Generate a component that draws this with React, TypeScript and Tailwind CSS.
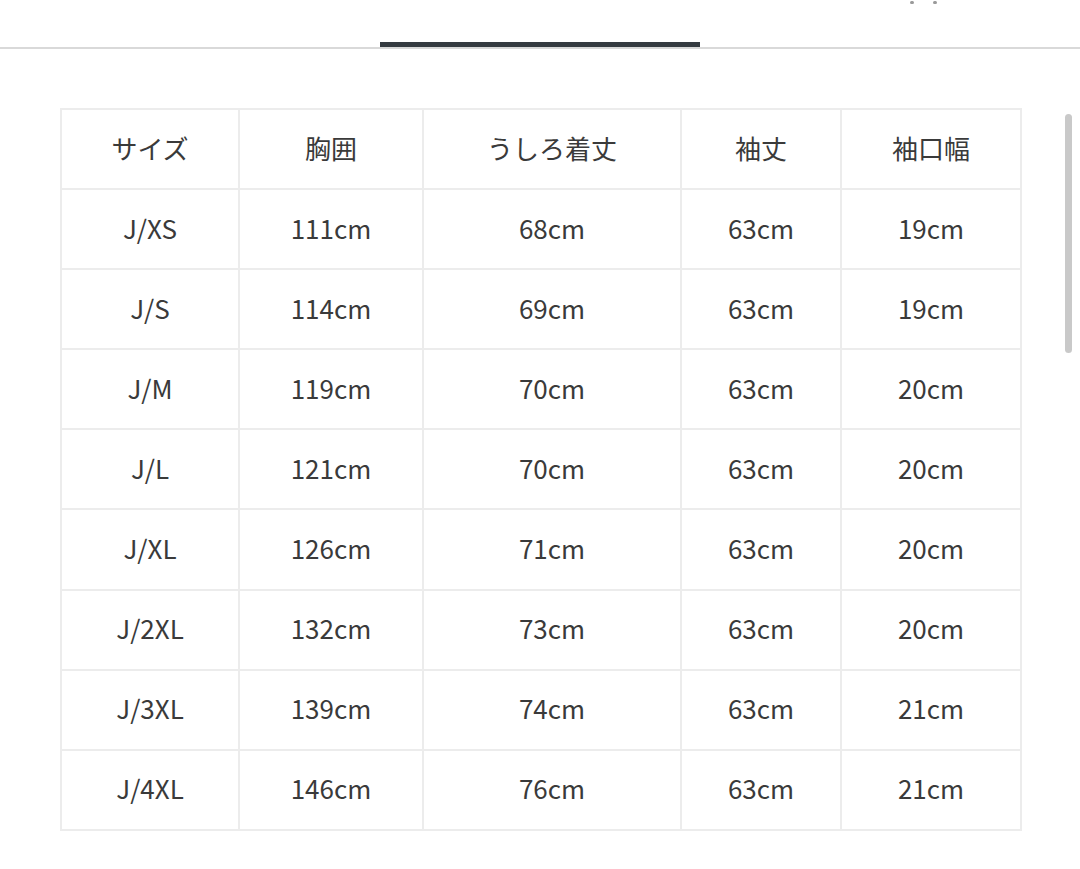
import React from 'react'

const headers = ['サイズ', '胸囲', 'うしろ着丈', '袖丈', '袖口幅']

const rows: string[][] = [
  ['J/XS', '111cm', '68cm', '63cm', '19cm'],
  ['J/S', '114cm', '69cm', '63cm', '19cm'],
  ['J/M', '119cm', '70cm', '63cm', '20cm'],
  ['J/L', '121cm', '70cm', '63cm', '20cm'],
  ['J/XL', '126cm', '71cm', '63cm', '20cm'],
  ['J/2XL', '132cm', '73cm', '63cm', '20cm'],
  ['J/3XL', '139cm', '74cm', '63cm', '21cm'],
  ['J/4XL', '146cm', '76cm', '63cm', '21cm']
]

const colWidths = ['w-[178px]', 'w-[184px]', 'w-[258px]', 'w-[160px]', 'w-[180px]']

export default function App() {
  return (
    <div
      className="relative h-[869px] w-[1080px] overflow-hidden bg-white text-[#3a3a3a]"
      style={{ fontFamily: '"Noto Sans CJK JP", "Noto Sans", sans-serif' }}
    >
      {/* tab bar */}
      <div className="flex h-[49px] flex-col border-b-2 border-[#d9d9d9]">
        <div className="flex h-[42px] justify-end gap-[19px] pr-[143px]">
          <span className="mt-[1px] h-[3px] w-[4px] rounded-full bg-[#9a9a9a]" />
          <span className="mt-[1px] h-[3px] w-[4px] rounded-full bg-[#9a9a9a]" />
        </div>
        <div className="ml-[380px] h-[5px] w-[320px] bg-[#343a40]" />
      </div>

      <div className="pl-[60px] pt-[59px]">
        <table className="table-fixed border-collapse text-center text-[26px] font-normal">
          <colgroup>
            {colWidths.map((w, i) => (
              <col key={i} className={w} />
            ))}
          </colgroup>
          <thead>
            <tr className="h-[80.1px]">
              {headers.map((h) => (
                <th key={h} className="border-2 border-[#ececec] pb-[4px] font-normal">
                  {h}
                </th>
              ))}
            </tr>
          </thead>
          <tbody>
            {rows.map((r) => (
              <tr key={r[0]} className="h-[80.1px]">
                {r.map((c, i) => (
                  <td key={i} className="border-2 border-[#ececec] pb-[4px]">
                    {c}
                  </td>
                ))}
              </tr>
            ))}
          </tbody>
        </table>
      </div>

      {/* overlay scrollbar */}
      <div className="absolute left-[1065px] top-[114px] h-[239px] w-[7px] rounded-full bg-[#c9c9c9]" />
    </div>
  )
}
